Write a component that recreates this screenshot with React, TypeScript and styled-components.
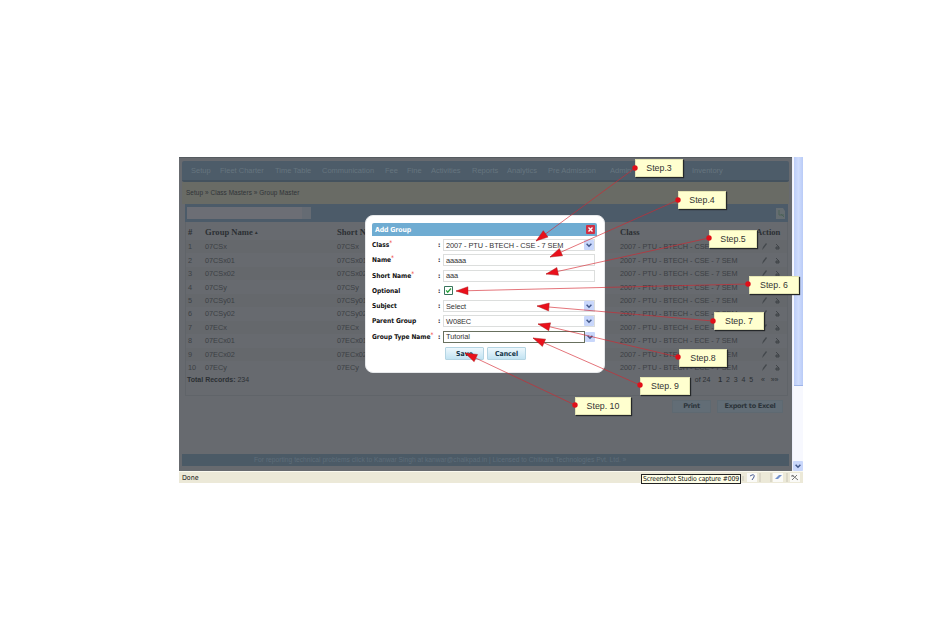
import React from "react";
import styled, { createGlobalStyle } from "styled-components";

const Global = createGlobalStyle`
  *{box-sizing:border-box}
  body{margin:0;background:#fff;font-family:"Liberation Sans",Arial,sans-serif}
`;
const Page = styled.main`width:948px;height:622px;padding:157px 0 0 179px;overflow:hidden;`;
const Capture = styled.div`position:relative;width:624px;height:326px;`;
const Window = styled.div`display:grid;grid-template-columns:613px 11px;height:314px;`;
const Screen = styled.div`background:#676a6f;display:flex;flex-direction:column;padding:3px 3px 0;border-top:1px solid #555b60;`;
const Nav = styled.nav`height:21px;background:#4d5c69;display:flex;align-items:center;padding-left:9px;font-size:7.5px;color:#66757f;border-radius:2px;white-space:pre;border-bottom:2px solid #44525e;`;
const NavItem = styled.span<{ $w: number }>`width:${p => p.$w}px;flex:none;`;
const Crumbs = styled.div`height:22px;background:#696b65;font-size:6.4px;letter-spacing:.08px;line-height:22px;padding-left:4px;color:#303438;`;
const SearchBar = styled.div`height:18px;margin:0 1px 0 3px;background:#4c5b69;display:flex;align-items:center;justify-content:space-between;padding:0 2px;`;
const SearchBox = styled.div`width:124px;height:12px;background:#6c6e75;border-right:9px solid #656b73;`;
const SheetIcon = styled.svg`width:11px;height:13px;display:block;`;
const Table = styled.section`height:174px;margin:0 1px 0 3px;border:1px solid #606469;border-top:0;padding-top:2px;`;
const Row = styled.div<{ $head?: boolean; $odd?: boolean }>`
  display:grid;grid-template-columns:17px 132px 283px 140px 14px 16px;align-items:center;
  height:${p => (p.$head ? 16 : 13.45)}px;padding-left:2px;white-space:nowrap;
  background:${p => (p.$odd ? "#65686c" : "transparent")};color:${p => (p.$head ? "#2c3034" : "#3c4044")};
  font:${p => (p.$head ? 'bold 8.6px "Liberation Serif",serif' : '7.3px "Liberation Sans",sans-serif')};
  letter-spacing:${p => (p.$head ? 0 : -0.03)}px;
`;
const SortMark = styled.span`font-size:5px;vertical-align:1px;`;
const ActionHead = styled.span`justify-self:start;margin-left:-4px;`;
const TotalRow = styled.div`display:flex;justify-content:space-between;height:12px;line-height:12px;padding:0 2px 0 1px;font-size:7px;color:#2c3034;white-space:pre;`;
const Pager = styled.span`width:96px;`;
const ActionBar = styled.div`display:flex;justify-content:flex-end;gap:6px;margin:4px 6px 0 0;`;
const DimButton = styled.div<{ $w: number }>`width:${p => p.$w}px;height:13px;background:#626d76;border:1px solid #5e6971;color:#2c343a;font:bold 6.6px/11px "DejaVu Sans",sans-serif;letter-spacing:-.35px;text-align:center;`;
const Footer = styled.footer`height:12px;margin-top:auto;margin-bottom:5px;background:#4b5a66;color:#5e6d79;font-size:6.7px;line-height:12px;padding-left:72px;white-space:nowrap;`;
const Scroll = styled.div`background:#f7f8fe;display:flex;flex-direction:column;align-items:center;justify-content:space-between;border-left:1px solid #eef0fb;`;
const Thumb = styled.div`width:9px;height:229px;background:linear-gradient(90deg,#bccdf8,#cfdcfd 50%,#b9cbf7);border-bottom:1px solid #9eb4e8;`;
const Status = styled.div`height:12px;background:#ece9d8;border-top:1px solid #faf9ef;display:flex;align-items:center;font:7px "DejaVu Sans Condensed","DejaVu Sans",sans-serif;color:#111;padding-left:3px;`;
const CaptureName = styled.span`margin-left:auto;margin-top:2px;width:100px;height:10px;flex:none;border:1px solid #222;background:#ffffe8;line-height:9px;padding-left:1px;font-size:6.8px;letter-spacing:-.12px;white-space:nowrap;`;
const Tray = styled.svg`width:62px;height:11px;flex:none;display:block;`;

const Dialog = styled.section`position:absolute;left:186px;top:58px;width:240px;height:158px;background:#fff;border-radius:8px;border:1px solid #e6e8ea;padding:7px 7px 0 6px;`;
const DialogTitle = styled.header`height:13px;background:#6facd2;border-radius:2px 2px 0 0;display:flex;align-items:center;justify-content:space-between;padding:0 2px 0 3px;font:bold 6.9px "DejaVu Sans Condensed","DejaVu Sans",sans-serif;letter-spacing:-.12px;color:#fff;margin-bottom:1.5px;`;
const Close = styled.svg`width:9px;height:9px;display:block;`;
const Field = styled.label`display:grid;grid-template-columns:66px 5px 152px;height:15.25px;align-items:center;white-space:nowrap;font:bold 6.6px "DejaVu Sans Condensed","DejaVu Sans",sans-serif;letter-spacing:-.04px;color:#111;`;
const Star = styled.sup`color:#e33;font-size:6.5px;font-weight:400;line-height:0;vertical-align:2px;`;
const ControlRow = styled.span`display:flex;align-items:center;`;
const Control = styled.span<{ $focus?: boolean }>`flex:1;height:12px;border:1px solid ${p => (p.$focus ? "#68705e" : "#dcdedd")};background:#fff;display:flex;align-items:center;justify-content:space-between;padding-left:2px;font:7.4px "Liberation Sans",sans-serif;letter-spacing:-.08px;color:#333;`;
const Arrow = styled.svg`width:10px;height:10px;display:block;flex:none;`;
const Check = styled.svg`width:9px;height:9px;margin-left:1px;display:block;`;
const Buttons = styled.div`display:flex;gap:3px;margin:3px 0 0 73px;`;
const Button = styled.button`width:39px;height:13px;padding:0;background:linear-gradient(#eef8fd,#c2e3f2);border:1px solid #b5d5e3;border-radius:1px;font:bold 6.9px "DejaVu Sans Condensed","DejaVu Sans",sans-serif;color:#123447;`;
const Overlay = styled.svg`position:absolute;inset:0;width:624px;height:326px;overflow:visible;pointer-events:none;`;
const Note = styled.div<{ $x: number; $y: number; $w: number }>`
  position:absolute;left:${p => p.$x}px;top:${p => p.$y}px;width:${p => p.$w}px;height:18px;background:#ffffcf;
  border:1px solid #e5e5b4;box-shadow:1px 1px 1px #25282a;color:#333;font-size:8.8px;line-height:16px;text-align:center;white-space:nowrap;
`;

const nav: [string, number][] = [["Setup", 29], ["Fleet Charter", 55], ["Time Table", 47], ["Communication", 63], ["Fee", 22], ["Fine", 24], ["Activities", 41], ["Reports", 35], ["Analytics", 41], ["Pre Admission", 62], ["Admin", 82], ["Inventory", 40]];
const groups = ["07CSx", "07CSx01", "07CSx02", "07CSy", "07CSy01", "07CSy02", "07ECx", "07ECx01", "07ECx02", "07ECy"];
const fields: { label: string; star?: boolean; value: string; select?: boolean; focus?: boolean }[] = [
  { label: "Class", star: true, value: "2007 - PTU - BTECH - CSE - 7 SEM", select: true },
  { label: "Name", star: true, value: "aaaaa" },
  { label: "Short Name", star: true, value: "aaa" },
  { label: "Optional", value: "" },
  { label: "Subject", value: "Select", select: true },
  { label: "Parent Group", value: "W08EC", select: true },
  { label: "Group Type Name", star: true, value: "Tutorial", select: true, focus: true },
];
const notes = [
  { text: "Step.3", x: 456, y: 2, w: 48, from: [456, 11], to: [357, 84] },
  { text: "Step.4", x: 499, y: 34, w: 48, from: [499, 43], to: [371, 100] },
  { text: "Step.5", x: 530, y: 73, w: 48, from: [530, 81], to: [367, 117] },
  { text: "Step. 6", x: 570, y: 119, w: 50, from: [569, 127], to: [277, 134] },
  { text: "Step. 7", x: 535, y: 155, w: 50, from: [534, 164], to: [358, 149] },
  { text: "Step.8", x: 500, y: 192, w: 48, from: [499, 200], to: [359, 167] },
  { text: "Step. 9", x: 461, y: 220, w: 50, from: [461, 228], to: [354, 181] },
  { text: "Step. 10", x: 396, y: 240, w: 56, from: [396, 248], to: [286, 196] },
];

function PencilIcon() {
  return <svg width="8" height="9" viewBox="0 0 8 9"><path d="M2 8 3 5 6 1 7 2 4 6Z" fill="#44484d" /></svg>;
}
function DeleteIcon() {
  return <svg width="7" height="9" viewBox="0 0 7 9"><path d="M2 2 5 5M2 5h3v2H2z" stroke="#414549" fill="#52565b" /></svg>;
}
function SelectArrow() {
  return <Arrow viewBox="0 0 10 10"><rect width="10" height="10" rx="1" fill="#c9d7fb" /><path d="m2.6 3.8 2.4 2.4 2.4-2.4" stroke="#43598b" strokeWidth="1.5" fill="none" /></Arrow>;
}
function Pointer({ from, to }: { from: number[]; to: number[] }) {
  const angle = Math.atan2(to[1] - from[1], to[0] - from[0]) * 180 / Math.PI;
  return <g><path d={`M${from[0]} ${from[1]} L${to[0]} ${to[1]}`} stroke="#d52630" strokeWidth=".8" strokeOpacity=".8" />
    <path d="M0 0-12-4V4Z" fill="#e9101b" stroke="#a51a1c" strokeWidth=".4" transform={`translate(${to[0]} ${to[1]}) rotate(${angle})`} /></g>;
}

export default function App() {
  return <><Global /><Page><Capture>
    <Window>
      <Screen>
        <Nav>{nav.map(([t, w]) => <NavItem key={t} $w={w}>{t}</NavItem>)}</Nav>
        <Crumbs>Setup » Class Masters » Group Master</Crumbs>
        <SearchBar><SearchBox /><SheetIcon viewBox="0 0 11 13"><path d="M1 1h7l2 3v8H1z" fill="#656d71" /><path d="M4 3v5h5M6 7l3 3" stroke="#4c6258" fill="none" /></SheetIcon></SearchBar>
        <Table>
          <Row $head><span>#</span><span>Group Name <SortMark>▴</SortMark></span><span>Short Name</span><span>Class</span><ActionHead>Action</ActionHead></Row>
          {groups.map((g, i) => <Row key={g} $odd={i % 2 === 0}><span>{i + 1}</span><span>{g}</span><span>{g}</span><span>2007 - PTU - BTECH - {i < 6 ? "CSE" : "ECE"} - 7 SEM</span><PencilIcon /><DeleteIcon /></Row>)}
          <TotalRow><span><b>Total Records:</b> 234</span><Pager>   of 24    <b>1</b>  2  3  4  5    «   »»</Pager></TotalRow>
        </Table>
        <ActionBar><DimButton $w={39}>Print</DimButton><DimButton $w={66}>Export to Excel</DimButton></ActionBar>
        <Footer>For reporting technical problems click to Kanwar Singh at kanwar@chalkpad.in | Licensed to Chitkara Technologies Pvt. Ltd. »</Footer>
      </Screen>
      <Scroll><Thumb /><SelectArrow /></Scroll>
    </Window>
    <Status><span>Done</span><CaptureName>Screenshot Studio capture #009</CaptureName>
      <Tray viewBox="0 0 62 11"><path d="M2 4v5M19 1v9M30 1v9M46 1v9" stroke="#c9c6b7" /><path d="M6 1h10v9H6zM32 1h10v9H32zM49 1h10v9H49z" fill="#fafaf7" /><path d="M9 4q5-3 4 1l-2 3" stroke="#465a91" fill="none" /><path d="m34 7 4-4 3 0-4 4z" fill="#7391cc" /><path d="m51 3 6 5M56 3l-5 5M50 4h3" stroke="#777" fill="none" /></Tray>
    </Status>
    <Dialog>
      <DialogTitle>Add Group<Close viewBox="0 0 9 9"><rect width="9" height="9" rx="1" fill="#cf3144" /><path d="m2.5 2.5 4 4m0-4-4 4" stroke="#fff" strokeWidth="1.4" /></Close></DialogTitle>
      {fields.map(f => <Field key={f.label}><span>{f.label}{f.star && <Star>*</Star>}</span><span>:</span>
        {f.label === "Optional" ? <Check viewBox="0 0 9 9"><path d="M.5.5h8v8h-8z" fill="#fff" stroke="#38745c" /><path d="m2.2 4.3 1.5 2L7 2.5" stroke="#27a33a" strokeWidth="1.3" fill="none" /></Check>
          : <ControlRow><Control $focus={f.focus}>{f.value}{f.select && !f.focus && <SelectArrow />}</Control>{f.focus && <SelectArrow />}</ControlRow>}
      </Field>)}
      <Buttons><Button>Save</Button><Button>Cancel</Button></Buttons>
    </Dialog>
    <Overlay>{notes.map(n => <Pointer key={n.text} from={n.from} to={n.to} />)}</Overlay>
    {notes.map(n => <Note key={n.text} $x={n.x} $y={n.y} $w={n.w}>{n.text}</Note>)}
    <Overlay>{notes.map(n => <circle key={n.text} cx={n.from[0]} cy={n.from[1]} r="2.7" fill="#e00f18" />)}</Overlay>
  </Capture></Page></>;
}
